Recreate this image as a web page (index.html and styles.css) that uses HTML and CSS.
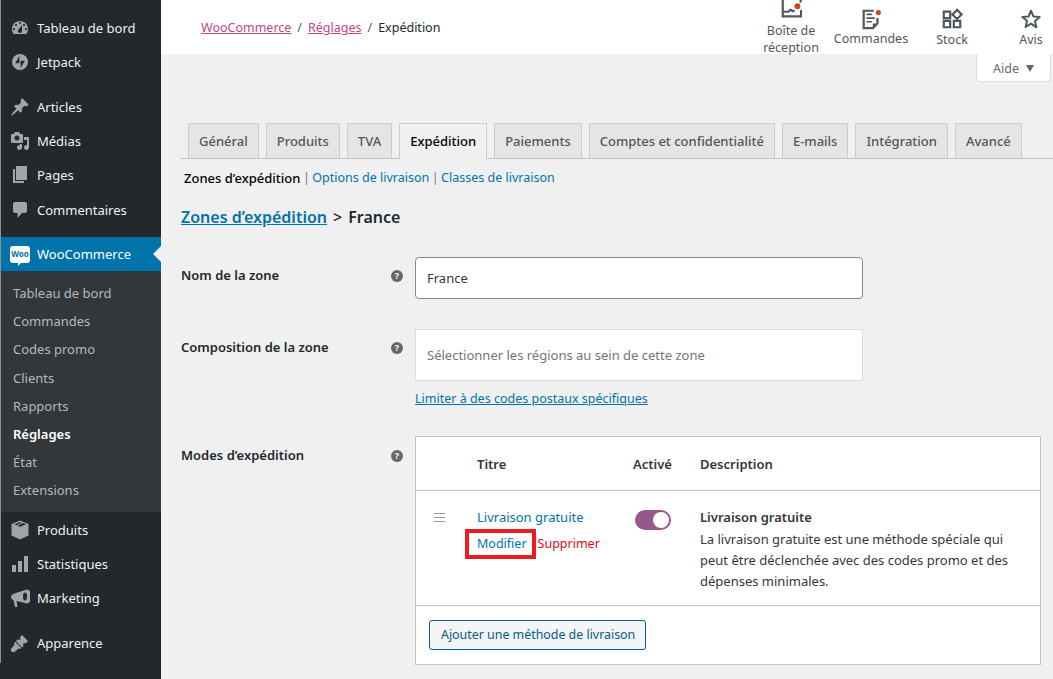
FILE: index.html
```html
<!DOCTYPE html>
<html lang="fr">
<head>
<meta charset="utf-8">
<title>Réglages – Expédition</title>
<link rel="stylesheet" href="styles.css">
</head>
<body>
<div class="page">
  <aside class="sidebar">
    <ul class="menu">
      <li class="item"><svg class="ico" viewBox="0 0 20 20"><path fill-rule="evenodd" d="M3.76 16h12.48c1.1-1.37 1.76-3.11 1.76-5 0-4.42-3.58-8-8-8s-8 3.58-8 8c0 1.89.66 3.63 1.76 5zM10 4c.55 0 1 .45 1 1s-.45 1-1 1-1-.45-1-1 .45-1 1-1zM6 6c.55 0 1 .45 1 1s-.45 1-1 1-1-.45-1-1 .45-1 1-1zm8 0c.55 0 1 .45 1 1s-.45 1-1 1-1-.45-1-1 .45-1 1-1zm-5.37 5.55L12 7v6c0 1.1-.9 2-2 2s-2-.9-2-2c0-.57.24-1.08.63-1.45zM4 10c.55 0 1 .45 1 1s-.45 1-1 1-1-.45-1-1 .45-1 1-1zm12 0c.55 0 1 .45 1 1s-.45 1-1 1-1-.45-1-1 .45-1 1-1z"/></svg>Tableau de bord</li>
      <li class="item"><svg class="ico" viewBox="0 0 20 20"><path fill-rule="evenodd" d="M10 2a8 8 0 1 0 0 16 8 8 0 0 0 0-16zM9.400 4v7.200H5.200zM10.600 16V8.800h4.200z"/></svg>Jetpack</li>
      <li class="sep"></li>
      <li class="item"><svg class="ico" viewBox="0 0 20 20"><path d="M10.44 3.02l1.82-1.82 6.36 6.35-1.83 1.82c-1.05-.68-2.48-.57-3.41.36l-.75.75c-.92.93-1.04 2.35-.35 3.41l-1.83 1.82-2.41-2.41-2.8 2.79c-.42.42-3.38 2.71-3.8 2.29s1.86-3.39 2.28-3.81l2.79-2.79L4.1 9.36l1.83-1.82c1.05.69 2.48.57 3.4-.36l.75-.75c.93-.92 1.05-2.35.36-3.41z"/></svg>Articles</li>
      <li class="item"><svg class="ico" viewBox="0 0 20 20"><path fill-rule="evenodd" d="M13 11V4c0-.55-.45-1-1-1h-1.67L9 1H5L3.67 3H2c-.55 0-1 .45-1 1v7c0 .55.45 1 1 1h10c.55 0 1-.45 1-1zM7 4.500c1.38 0 2.500 1.12 2.500 2.500S8.380 9.500 7 9.500 4.500 8.380 4.500 7 5.620 4.500 7 4.500zM14 6h5v10.500c0 1.38-1.12 2.500-2.500 2.500S14 17.880 14 16.500s1.120-2.500 2.500-2.500c.17 0 .34.02.5.05V9h-3V6zm-4 8.050V13h2v3.500c0 1.380-1.120 2.500-2.500 2.500S7 17.880 7 16.500 8.120 14 9.500 14c.17 0 .34.02.5.05z"/></svg>Médias</li>
      <li class="item"><svg class="ico" viewBox="0 0 20 20"><path d="M6 1h11v14H6zM3 4h2v12h9v2H3z"/></svg>Pages</li>
      <li class="item item-gap"><svg class="ico" viewBox="0 0 20 20"><path d="M5 2h10c1.100 0 2 .9 2 2v7c0 1.100-.9 2-2 2h-3l-4.500 5v-5H5c-1.100 0-2-.9-2-2V4c0-1.100.9-2 2-2z"/></svg>Commentaires</li>
      <li class="sep sep-b"></li>
      <li class="item current">
        <span class="woo-logo"><span class="woo-text">Woo</span></span>WooCommerce<span class="arrow"></span>
      </li>
      <li>
        <ul class="submenu">
          <li>Tableau de bord</li>
          <li>Commandes</li>
          <li>Codes promo</li>
          <li>Clients</li>
          <li>Rapports</li>
          <li class="sub-current">Réglages</li>
          <li>État</li>
          <li>Extensions</li>
        </ul>
      </li>
      <li class="item"><svg class="ico" viewBox="0 0 20 20"><path fill-rule="evenodd" d="M10 .5l8.500 3.500v11.500L10 19.500 1.500 15.500V4zM4.500 4.200L10 6.700l6-2.500L13.300 3 8 5.500 6.700 5 11.500 2.700 10 2z"/></svg>Produits</li>
      <li class="item"><svg class="ico" viewBox="0 0 20 20"><path d="M2 11h4v7H2zM8 7h4v11H8zM14 2h4v16h-4z"/></svg>Statistiques</li>
      <li class="item"><svg class="ico" viewBox="0 0 20 20"><path fill-rule="evenodd" d="M17 1.500a4.500 7 0 0 1 0 14L6.500 13l1 6H5l-1.500-6.700A3.500 3.500 0 0 1 1 9a3.500 3.500 0 0 1 2.500-3.300zM15 4.500a2 4 0 0 0 0 8 2 4 0 0 0 0-8z"/></svg>Marketing</li>
      <li class="sep"></li>
      <li class="item"><svg class="ico" viewBox="0 0 20 20"><path d="M12 2l6 6-2.500 2.500-1.500-.5-1 1 .5 2-1.500 1.500L6 8l1.500-1.500 2 .5 1-1-.5-1.500zM5.200 8.800l6 6-1.200 1.200-1.500-.5-4 3.500H2l-1-1v-2.200l3.500-4-.5-1.500z"/></svg>Apparence</li>
    </ul>
  </aside>

  <div class="main">
    <header class="topbar">
      <nav class="crumbs">
        <a class="crumb-link" href="#">WooCommerce</a><span class="crumb-sep">/</span><a class="crumb-link" href="#">Réglages</a><span class="crumb-sep">/</span><span class="crumb-now">Expédition</span>
      </nav>
      <div class="activity">
        <div class="act act-inbox">
          <svg class="act-ico" viewBox="0 0 24 24"><path d="M3 0v20h20V13M22.500 -2V5M3 15h6l2.500-2 2.500 1.500 2-1" fill="none" stroke="#50575e" stroke-width="2.400"/><circle cx="19" cy="9" r="3.200" fill="#c9481c"/></svg>
          <span class="act-label">Boîte de<br>réception</span>
        </div>
        <div class="act act-orders">
          <svg class="act-ico" viewBox="0 0 24 24"><path d="M15 3H4v19h10l5-5v-6" fill="none" stroke="#50575e" stroke-width="2.400"/><path d="M7 7h6M7 11h9M7 15h6" stroke="#50575e" stroke-width="1.800"/><path d="M14 22v-5h5z" fill="#50575e"/><circle cx="20" cy="5" r="2.800" fill="#c9481c"/></svg>
          <span class="act-label">Commandes</span>
        </div>
        <div class="act act-stock">
          <svg class="act-ico" viewBox="0 0 24 24"><path d="M3 4h7v7H3zM3 14h7v7H3zM14 14h7v7h-7zM17.500 2l5 5-5 5-5-5z" fill="none" stroke="#50575e" stroke-width="2.400"/></svg>
          <span class="act-label">Stock</span>
        </div>
        <div class="act act-reviews">
          <svg class="act-ico" viewBox="0 0 24 24"><path d="M12 3l2.700 6.300 6.800.6-5.200 4.500 1.600 6.700L12 17l-5.900 3.600 1.600-6.700L2.500 9.900l6.800-.6z" fill="none" stroke="#50575e" stroke-width="2.200" stroke-linejoin="round"/></svg>
          <span class="act-label">Avis</span>
        </div>
      </div>
    </header>

    <div class="help-row"><div class="help-tab">Aide<span class="caret"></span></div></div>

    <nav class="tabs">
      <a class="tab">Général</a>
      <a class="tab">Produits</a>
      <a class="tab">TVA</a>
      <a class="tab tab-active">Expédition</a>
      <a class="tab">Paiements</a>
      <a class="tab">Comptes et confidentialité</a>
      <a class="tab">E-mails</a>
      <a class="tab">Intégration</a>
      <a class="tab">Avancé</a>
    </nav>

    <div class="content">
      <ul class="subsub">
        <li class="subsub-now">Zones d’expédition</li>
        <li class="subsub-sep">|</li>
        <li><a class="blue">Options de livraison</a></li>
        <li class="subsub-sep">|</li>
        <li><a class="blue">Classes de livraison</a></li>
      </ul>

      <h2 class="zone-title"><a class="zone-link" href="#">Zones d’expédition</a><span class="gt">&gt;</span>France</h2>

      <div class="form-row row-name">
        <div class="label">Nom de la zone</div>
        <span class="tip">?</span>
        <div class="field"><input class="text-input" type="text" value="France"></div>
      </div>

      <div class="form-row row-regions">
        <div class="label">Composition de la zone</div>
        <span class="tip">?</span>
        <div class="field">
          <div class="select-box">Sélectionner les régions au sein de cette zone</div>
          <a class="postcode" href="#">Limiter à des codes postaux spécifiques</a>
        </div>
      </div>

      <div class="form-row row-methods">
        <div class="label">Modes d’expédition</div>
        <span class="tip">?</span>
        <div class="methods">
          <div class="m-head">
            <div class="c-title">Titre</div>
            <div class="c-on">Activé</div>
            <div class="c-desc">Description</div>
          </div>
          <div class="m-row">
            <div class="c-handle"><span class="handle"></span></div>
            <div class="c-title">
              <a class="blue">Livraison gratuite</a>
              <div class="actions"><a class="blue modify">Modifier</a><a class="remove">Supprimer</a></div>
            </div>
            <div class="c-on"><span class="toggle"><span class="knob"></span></span></div>
            <div class="c-desc">
              <strong>Livraison gratuite</strong>
              <p class="desc-text">La livraison gratuite est une méthode spéciale qui peut être déclenchée avec des codes promo et des dépenses minimales.</p>
            </div>
          </div>
          <div class="m-foot"><button class="add-btn" type="button">Ajouter une méthode de livraison</button></div>
        </div>
      </div>
    </div>
  </div>
</div>
</body>
</html>
```

FILE: styles.css
```css
*, *::before, *::after { box-sizing: border-box; }
html, body { margin: 0; height: 679px; overflow: hidden; }
body {
  background: #f0f0f1;
  color: #3c434a;
  font-family: "Noto Sans", sans-serif;
  font-size: 13px;
  line-height: 1.4;
}
ul { list-style: none; margin: 0; padding: 0; }
a { text-decoration: none; }
.page { display: flex; height: 679px; }

/* Sidebar */
.sidebar {
  width: 161px;
  flex: none;
  background: linear-gradient(#8c8f94, #8c8f94) 0 0 / 1px 663px no-repeat, #23282d;
  padding: 11px 0 0 1px;
  color: #f0f0f1;
}
.item {
  display: flex;
  align-items: center;
  height: 34px;
  padding-left: 9px;
  position: relative;
}
.item-gap { margin-top: 1px; }
.ico { width: 20px; height: 20px; margin-right: 7px; fill: #a0a5aa; flex: none; }
.sep { height: 11px; }
.sep-b { height: 10px; }
.current { background: #0073aa; color: #fff; }
.woo-logo {
  width: 20px;
  height: 17px;
  margin-right: 7px;
  background: #fff;
  border-radius: 3px;
  display: flex;
  align-items: center;
  justify-content: center;
  position: relative;
}
.woo-logo::after {
  content: "";
  position: absolute;
  left: 8px;
  bottom: -3px;
  border-top: 3px solid #fff;
  border-right: 3px solid transparent;
}
.woo-text { font-size: 8px; font-weight: 700; color: #0073aa; line-height: 1; }
.arrow {
  position: absolute;
  right: 0;
  top: 9px;
  border: 8px solid transparent;
  border-right-color: #f0f0f1;
  border-left-width: 0;
}
.submenu { background: #32373c; padding: 8.2px 0 7.84px; margin-bottom: 1px; color: #b4b9be; }
.submenu li { height: 28.12px; line-height: 28px; padding-left: 12px; }
.submenu .sub-current { color: #fff; font-weight: 600; }

/* Main column */
.main { flex: 1; min-width: 0; }
.topbar {
  height: 54px;
  background: #fff;
  display: flex;
  justify-content: space-between;
}
.crumbs { padding: 19px 0 0 40px; line-height: 18px; font-size: 12.5px; }
.crumb-link { color: #c2467f; text-decoration: underline; }
.crumb-sep { margin: 0 6px; color: #50575e; }
.crumb-now { color: #23282d; }
.activity { display: flex; align-items: flex-start; flex: none; width: 292px; color: #50575e; font-size: 12.5px; }
.act { display: flex; flex-direction: column; align-items: center; text-align: center; line-height: 17px; flex: none; }
.act-ico { width: 22px; height: 22px; display: block; }
.act-inbox { width: 60px; margin-top: -2px; }
.act-inbox .act-ico { margin-bottom: 2px; }
.act-orders { width: 100px; margin-top: 8px; }
.act-stock { width: 62px; margin-top: 8px; }
.act-stock .act-ico { margin-bottom: 1px; }
.act-reviews { width: 40px; margin: 8px 0 0 28px; }
.act-reviews .act-ico { margin-bottom: 1px; }

.help-row { display: flex; justify-content: flex-end; padding-right: 2px; height: 69px; }
.help-tab {
  width: 75px;
  height: 28px;
  background: #fff;
  border: 1px solid #dcdcde;
  border-top: 0;
  border-radius: 0 0 4px 4px;
  color: #646970;
  display: flex;
  align-items: center;
  padding: 2px 0 0 16px;
  font-size: 12.5px;
}
.caret {
  margin-left: 7px;
  border-top: 7px solid #646970;
  border-left: 4.5px solid transparent;
  border-right: 4.5px solid transparent;
}

/* Tabs */
.tabs {
  margin-left: 20px;
  padding-left: 7px;
  height: 36px;
  border-bottom: 1px solid #c3c4c7;
  display: flex;
  gap: 7px;
  align-items: flex-start;
}
.tab {
  height: 35px;
  padding: 0 10px;
  background: #e5e5e5;
  border: 1px solid #ccc;
  border-bottom: 0;
  color: #50575e;
  font-weight: 500;
  font-size: 13px;
  line-height: 35px;
  white-space: nowrap;
}
.tab-active { background: #f0f0f1; color: #000; height: 36px; }

/* Content */
.content { padding-left: 20px; }
.subsub { display: flex; padding: 10px 0 0 3px; line-height: 18px; height: 36px; font-size: 12.5px; }
.subsub-now { color: #000; font-weight: 500; font-size: 13px; }
.subsub-sep { margin: 0 2.5px; color: #787c82; }
.blue { color: #0073aa; }
.zone-title {
  margin: 10px 0 0;
  font-size: 16px;
  font-weight: 600;
  line-height: 24px;
  color: #23282d;
}
.zone-link { color: #0073aa; text-decoration: underline; }
.gt { margin: 0 6px; font-weight: 500; }

.form-row { display: flex; }
.label { width: 218px; font-weight: 600; color: #23282d; flex: none; position: relative; }
.tip {
  position: relative;
  width: 12px;
  height: 12px;
  margin: 4px 12px 0 -8px;
  border-radius: 50%;
  background: #666;
  color: #fff;
  font-size: 9px;
  font-weight: 700;
  line-height: 12px;
  text-align: center;
  flex: none;
}
.row-name { margin-top: 28px; }
.row-name .label, .row-name .tip { top: 9px; }
.row-regions { margin-top: 30px; }
.row-regions .label, .row-regions .tip { top: 9px; }
.row-methods { margin-top: 28px; }
.row-methods .label, .row-methods .tip { top: 10px; }
.field { width: 448px; flex: none; }
.text-input {
  display: block;
  width: 448px;
  height: 42px;
  border: 1px solid #7e8993;
  border-radius: 4px;
  background: #fff;
  padding: 0 11px;
  font: inherit;
  color: #32373c;
}
.select-box {
  height: 52px;
  background: #fff;
  border: 1px solid #ddd;
  padding: 0 11px;
  line-height: 50px;
  color: #757575;
}
.postcode { display: block; margin-top: 9px; line-height: 18px; color: #0073aa; text-decoration: underline; font-size: 12.5px; }

.methods { width: 626px; height: 229px; background: #fff; border: 1px solid #c3c4c7; flex: none; }
.m-head, .m-row { display: flex; }
.m-head { height: 54px; align-items: center; border-bottom: 1px solid #c3c4c7; font-weight: 600; color: #32373c; padding: 2px 0 0 61px; }
.m-head .c-title { width: 156px; }
.m-head .c-on { width: 67px; }
.m-row { height: 115px; border-bottom: 1px solid #c3c4c7; padding-top: 17px; }
.c-handle { width: 61px; padding: 5px 0 0 18px; }
.handle { display: block; width: 11px; height: 9px; border-top: 1px solid #999; border-bottom: 1px solid #999; position: relative; }
.handle::after { content: ""; position: absolute; left: 0; right: 0; top: 3px; border-top: 1px solid #999; }
.m-row .c-title { width: 158px; }
.actions { display: flex; margin-top: 9px; font-size: 12.5px; }
.modify { position: relative; margin-right: 11px; }
.modify::after {
  content: "";
  position: absolute;
  left: -12px;
  top: -6px;
  width: 71px;
  height: 30px;
  border: 4px solid #ed1c24;
}
.remove { color: #e3061a; }
.m-row .c-on { width: 65px; padding-top: 2px; }
.toggle { display: block; width: 36px; height: 20px; border-radius: 10px; background: #96588a; position: relative; }
.knob { position: absolute; right: 2px; top: 2px; width: 16px; height: 16px; border-radius: 50%; background: #fff; }
.m-row .c-desc { width: 322px; }
.m-row strong { font-weight: 600; color: #32373c; display: block; line-height: 18px; }
.desc-text { margin: 3px 0 0; line-height: 21px; color: #32373c; }
.m-foot { padding: 14px 0 0 13px; }
.add-btn {
  height: 30px;
  padding: 0 10px 0 11px;
  background: #f3f5f6;
  border: 1px solid #016087;
  border-radius: 3px;
  color: #016087;
  font: inherit;
  font-size: 12.4px;
}
```
